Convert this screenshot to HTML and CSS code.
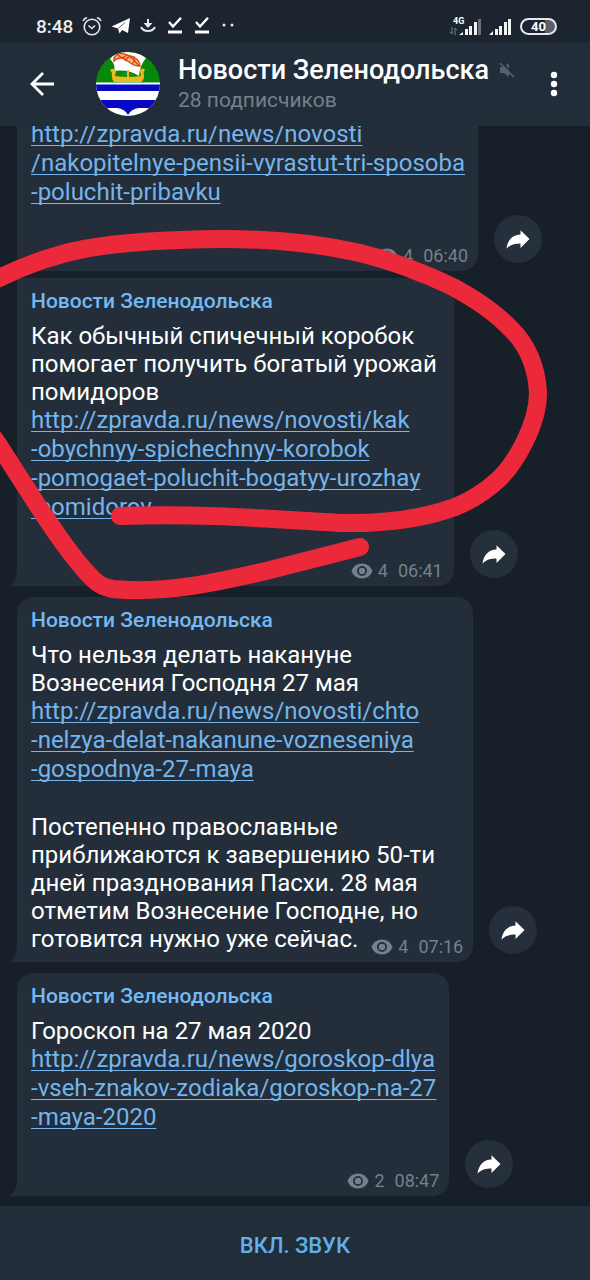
FILE: index.html
```html
<!DOCTYPE html>
<html lang="ru">
<head>
    <meta charset="UTF-8">
    <meta name="viewport" content="width=device-width, initial-scale=1.0">
    <title>Новости Зеленодольска</title>
    <link rel="stylesheet" href="styles.css">
</head>
<body>
    <svg class="sprite" aria-hidden="true">
        <symbol id="share" viewBox="0 0 24 19">
            <path d="M14.500 0.300 L23.500 9 L14.500 18 V13.500 C9 13.500 4 14.500 0.500 18.800 C1.500 10 6.500 4.800 14.500 4.500 Z" fill="#fff"/>
        </symbol>
        <symbol id="eye" viewBox="0 0 22 16">
            <path d="M11 0.500 C6 0.500 2 3.500 0.500 8 C2 12.500 6 15.500 11 15.500 C16 15.500 20 12.500 21.500 8 C20 3.500 16 0.500 11 0.500 Z M11 13 A5 5 0 1 1 11 3 A5 5 0 0 1 11 13 Z" fill="currentColor" fill-rule="evenodd"/>
            <circle cx="11" cy="8" r="3.200" fill="currentColor"/>
        </symbol>
        <symbol id="check" viewBox="0 0 16 18">
            <path d="M2 5 L6 9.500 L14 0.800" fill="none" stroke="#fff" stroke-width="2.400"/>
            <path d="M1 13.500 H15 V16.500 H1 Z" fill="#fff"/>
        </symbol>
    </svg>

    <div class="app">
        <div class="status">
            <span class="clock">8:48</span>
            <svg width="20" height="20" viewBox="0 0 20 20" fill="none" stroke="#e4e8ec" stroke-width="1.600">
                <circle cx="10" cy="11" r="7.800"/>
                <path d="M6.500 9.500 L10 12.500 L13 9.500 M1 5 Q2 2.500 5 1.500 M19 5 Q18 2.500 15 1.500"/>
            </svg>
            <svg width="20" height="18" viewBox="0 0 20 18">
                <path d="M0.500 9.500 L19 1 L17 16 L11 13 L8.500 16.500 L7 11.500 Z" fill="#fff"/>
                <path d="M7 11.500 L14 5.500" stroke="#1c252f" stroke-width="0.700"/>
            </svg>
            <svg width="16" height="18" viewBox="0 0 16 18" fill="none" stroke="#e4e8ec" stroke-width="2">
                <path d="M8 2 V8"/>
                <path d="M3.500 6 H12.500 L8 11 Z" fill="#e4e8ec" stroke="none"/>
                <path d="M1 10 Q3 14 8 14 Q13 14 15 10"/>
            </svg>
            <svg class="check" width="16" height="18"><use href="#check"/></svg>
            <svg class="check" width="16" height="18"><use href="#check"/></svg>
            <svg width="18" height="18" viewBox="0 0 18 18" fill="#e4e8ec">
                <circle cx="5" cy="8" r="1.500"/>
                <circle cx="13" cy="8" r="1.500"/>
            </svg>
            <div class="status-right">
                <div class="network">
                    <span class="net-type">4G</span>
                    <svg width="7" height="8" viewBox="0 0 7 8" fill="none" stroke="#77808a">
                        <path d="M2 0 V7 L0 5 M5 8 V1 L7 3"/>
                    </svg>
                </div>
                <svg width="23" height="17" viewBox="0 0 23 17" fill="#f0f3f5">
                    <path d="M0 17 L4 14 V17 Z M6 11 H9 V17 H6 Z M10 8 H13 V17 H10 Z M15 4 H18 V17 H15 Z"/>
                    <path d="M19 1 H22 V17 H19 Z" fill="#68717b"/>
                </svg>
                <svg class="signal-two" width="23" height="17" viewBox="0 0 23 17" fill="#f0f3f5">
                    <path d="M0 17 L4 13 V17 Z M6 11 H9 V17 H6 Z M10 8 H13 V17 H10 Z M15 4 H18 V17 H15 Z M19 1 H22 V17 H19 Z"/>
                </svg>
                <span class="battery">40</span>
            </div>
        </div>

        <header class="header">
            <button class="icon-button" aria-label="Назад">
                <svg width="26" height="26" viewBox="0 0 26 26" fill="none" stroke="#fff" stroke-width="2.800">
                    <path d="M25 13 H3 M14 2 L3 13 L14 24"/>
                </svg>
            </button>
            <svg class="avatar" viewBox="0 0 64 64">
                <clipPath id="round"><circle cx="32" cy="32" r="32"/></clipPath>
                <g clip-path="url(#round)">
                    <path d="M0 0 H64 V32 H0 Z" fill="#078a0c"/>
                    <path d="M14 7 Q20 -2 32 0 Q44 0 50 6 Q44 13 43 24 Q32 17 18 19 Q20 13 14 7 Z" fill="#fff"/>
                    <g fill="none" stroke="#e2481f" stroke-width="1.500">
                        <path d="M18 6 Q22 0 28 2 T38 5 Q44 9 44 14 Q38 14 33 10 T24 6 Q21 6 18 9 Z" fill="#f7c46a"/>
                        <path d="M22 3 Q26 8 31 3 M29 9 Q32 3 36 6 Q40 9 36 12 M38 6 Q38 10 44 14"/>
                    </g>
                    <path d="M14 18 Q18 15 20 19 L19 24 Q32 26 45 24 L44 18 Q47 15 49 18 Q47 20 48 24 Q48 28 45 30 H18 Q15 27 16 21 Z" fill="#edb91b"/>
                    <path d="M24 23 Q27 19 32 20 Q37 20 39 23 Q32 25 24 23 Z" fill="#1d8b20"/>
                    <path d="M31 18 H33 V25 H31 Z" fill="#edb91b"/>
                    <path d="M0 30.500 H64 V64 H0 Z" fill="#fff"/>
                    <path d="M0 32.500 H64 V39 H0 Z M0 48 H64 V56 H43 Q35 57 32 63 Q29 57 21 56 H0 Z" fill="#0808c4"/>
                </g>
            </svg>
            <div class="heading">
                <h1 class="title">Новости Зеленодольска
                    <svg width="16" height="16" viewBox="0 0 16 16" fill="#536170">
                        <path d="M1 5 H5 L10 1 V15 L5 11 H1 Z"/>
                        <path d="M2 0 L16 14" stroke="#222d3a" stroke-width="2"/>
                        <path d="M1 1 L15 15" stroke="#536170" stroke-width="1.600"/>
                    </svg>
                </h1>
                <div class="subtitle">28 подписчиков</div>
            </div>
            <button class="icon-button" aria-label="Меню">
                <svg width="8" height="26" viewBox="0 0 8 26" fill="#fff">
                    <circle cx="4" cy="4" r="3.200"/>
                    <circle cx="4" cy="13" r="3.200"/>
                    <circle cx="4" cy="22" r="3.200"/>
                </svg>
            </button>
        </header>

        <main class="chat">
            <article class="message">
                <div class="bubble joined-bottom">
                    <a class="link" href="#">http://zpravda.ru/news/novosti<br>/nakopitelnye-pensii-vyrastut-tri-sposoba<br>-poluchit-pribavku</a>
                    <div class="meta meta-row">
                        <svg class="eye"><use href="#eye"/></svg><span>4</span><time>06:40</time>
                    </div>
                </div>
                <button class="share" aria-label="Переслать"><svg width="24" height="19"><use href="#share"/></svg></button>
            </article>

            <article class="message close">
                <div class="bubble tail joined-top roomy">
                    <h2 class="name">Новости Зеленодольска</h2>
                    <p class="text">Как обычный спичечный коробок<br>помогает получить богатый урожай<br>помидоров</p>
                    <a class="link" href="#">http://zpravda.ru/news/novosti/kak<br>-obychnyy-spichechnyy-korobok<br>-pomogaet-poluchit-bogatyy-urozhay<br>-pomidorov</a>
                    <div class="meta meta-row">
                        <svg class="eye"><use href="#eye"/></svg><span>4</span><time>06:41</time>
                    </div>
                </div>
                <button class="share" aria-label="Переслать"><svg width="24" height="19"><use href="#share"/></svg></button>
            </article>

            <article class="message">
                <div class="bubble tail">
                    <h2 class="name">Новости Зеленодольска</h2>
                    <p class="text">Что нельзя делать накануне<br>Вознесения Господня 27 мая</p>
                    <a class="link" href="#">http://zpravda.ru/news/novosti/chto<br>-nelzya-delat-nakanune-vozneseniya<br>-gospodnya-27-maya</a>
                    <p class="text after-link">Постепенно православные<br>приближаются к завершению 50-ти<br>дней празднования Пасхи. 28 мая<br>отметим Вознесение Господне, но</p>
                    <div class="last-line">
                        <p class="text">готовится нужно уже сейчас.</p>
                        <div class="meta">
                            <svg class="eye"><use href="#eye"/></svg><span>4</span><time>07:16</time>
                        </div>
                    </div>
                </div>
                <button class="share" aria-label="Переслать"><svg width="24" height="19"><use href="#share"/></svg></button>
            </article>

            <article class="message">
                <div class="bubble tail">
                    <h2 class="name">Новости Зеленодольска</h2>
                    <p class="text">Гороскоп на 27 мая 2020</p>
                    <a class="link" href="#">http://zpravda.ru/news/goroskop-dlya<br>-vseh-znakov-zodiaka/goroskop-na-27<br>-maya-2020</a>
                    <div class="meta meta-row">
                        <svg class="eye"><use href="#eye"/></svg><span>2</span><time>08:47</time>
                    </div>
                </div>
                <button class="share" aria-label="Переслать"><svg width="24" height="19"><use href="#share"/></svg></button>
            </article>
        </main>

        <button class="unmute">ВКЛ. ЗВУК</button>

        <!-- red marker stroke over the chat -->
        <svg class="marker" viewBox="0 0 590 1280" aria-hidden="true">
            <path d="M120 516 C200 513 270 519 340 523 C390 524 425 518 455 507 Q480 497 500 478 C515 463 538 425 538 393 Q536 353 510 328 Q490 307 453 287 Q405 264 360 253 C320 244 280 239 225 239 C100 240 55 250 -5 280 C-70 330 -50 375 0 447 L38 506 C60 540 78 565 94 580 Q101 587 113 589 C165 594 220 582 270 570 L360 547"/>
        </svg>
    </div>
</body>
</html>
```
FILE: styles.css
```css
* {
    box-sizing: border-box;
}
body {
    margin: 0;
    font-family: Roboto, "Noto Sans", sans-serif;
    background: #171f28;
    color: #fff;
}
h1, h2, p {
    margin: 0;
}
button {
    padding: 0;
    border: none;
    background: none;
    font-family: inherit;
    cursor: pointer;
}
svg {
    display: block;
    flex-shrink: 0;
}
.sprite {
    position: absolute;
    width: 0;
    height: 0;
}
.app {
    position: relative;
    display: flex;
    flex-direction: column;
    height: 100vh;
}

/* status bar */
.status {
    display: flex;
    align-items: center;
    gap: 9px;
    padding: 10px 33px 0 36px;
    height: 42px;
    background: #1c252f;
}
.clock {
    font-size: 19px;
    font-weight: 500;
    color: #eceff2;
}
.check {
    margin-left: 2px;
}
.status-right {
    display: flex;
    align-items: center;
    gap: 1px;
    margin-left: auto;
}
.network {
    display: flex;
    flex-direction: column;
    gap: 1px;
    width: 8px;
}
.net-type {
    margin-left: 3px;
    font-size: 9px;
    line-height: 9px;
    font-weight: 700;
}
.signal-two {
    margin-left: 6px;
}
.battery {
    width: 37px;
    margin-left: 7px;
    border: 2px solid #e4e8ec;
    border-radius: 9px;
    background: linear-gradient(90deg, transparent 70%, #59616b 70%);
    font-size: 13px;
    line-height: 13px;
    font-weight: 700;
    text-align: center;
}

/* header */
.header {
    display: flex;
    align-items: center;
    padding: 0 32px 0 29px;
    height: 84px;
    background: #222d3a;
}
.avatar {
    width: 64px;
    height: 64px;
    margin-left: 41px;
}
.heading {
    flex: 1;
    padding-left: 18px;
}
.title {
    display: flex;
    align-items: center;
    gap: 10px;
    font-size: 27px;
    line-height: 32px;
    font-weight: 500;
    white-space: nowrap;
}
.subtitle {
    font-size: 21px;
    line-height: 28px;
    color: #74808e;
}

/* messages */
.chat {
    flex: 1;
    min-height: 0;
    display: flex;
    flex-direction: column;
    justify-content: flex-end;
    gap: 11px;
    padding: 0 17px 10px;
    overflow: hidden;
}
.message {
    display: flex;
    align-items: flex-end;
    gap: 16px;
}
.close {
    margin-top: -4px;
}
.bubble {
    position: relative;
    padding: 9px 13px 0 14px;
    border-radius: 16px;
    background: #232e3a;
    white-space: nowrap;
}
.tail {
    border-bottom-left-radius: 0;
}
.tail::before {
    content: "";
    position: absolute;
    left: -9px;
    bottom: 0;
    width: 9px;
    height: 16px;
    background: radial-gradient(ellipse 9px 16px at 0 0, transparent 97%, #232e3a 100%);
}
.joined-bottom {
    border-radius: 0 0 16px 4px;
}
.joined-top {
    border-top-left-radius: 4px;
}
.roomy {
    padding-right: 17px;
}
.name {
    margin-bottom: 7px;
    font-size: 21px;
    line-height: 28px;
    font-weight: 500;
    color: #73b9f2;
}
.text {
    font-size: 24px;
    line-height: 28px;
}
.link {
    display: block;
    font-size: 24px;
    line-height: 29px;
    color: #73b5ec;
    text-decoration: underline;
    text-decoration-thickness: 1px;
    text-decoration-skip-ink: none;
    text-underline-offset: 3px;
}
.after-link {
    margin-top: 29px;
}
.last-line {
    display: flex;
    align-items: flex-end;
    justify-content: space-between;
    gap: 13px;
    padding-bottom: 9px;
}
.meta {
    display: flex;
    align-items: center;
    margin-right: -3px;
    font-size: 18px;
    line-height: 20px;
    color: #74808c;
}
.roomy .meta {
    margin-right: -6px;
}
.last-line .meta {
    margin-bottom: -4px;
}
.meta-row {
    justify-content: flex-end;
    padding: 39px 0 5px;
}
.eye {
    width: 22px;
    height: 16px;
    margin-right: 5px;
}
.meta time {
    margin-left: 10px;
}
.share {
    display: flex;
    align-items: center;
    justify-content: center;
    width: 48px;
    height: 48px;
    margin-bottom: 8px;
    border-radius: 50%;
    background: #262f3c;
}

.unmute {
    height: 74px;
    padding-top: 4px;
    background: #222d3a;
    font-size: 22px;
    font-weight: 500;
    color: #5fb0ee;
}
.marker {
    position: absolute;
    top: 0;
    left: 0;
    width: 100%;
    pointer-events: none;
    fill: none;
    stroke: #ec293b;
    stroke-width: 18px;
    stroke-linecap: round;
    stroke-linejoin: round;
}
```
